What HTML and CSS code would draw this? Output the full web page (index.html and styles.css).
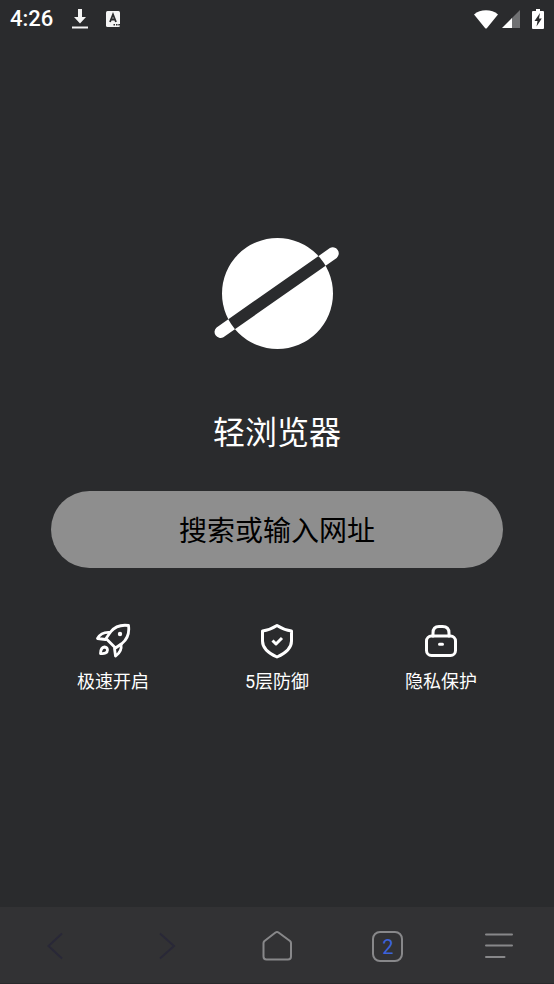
FILE: index.html
```html
<!DOCTYPE html>
<html lang="zh-CN">
<head>
<meta charset="utf-8">
<meta name="viewport" content="width=device-width, initial-scale=1">
<title>轻浏览器</title>
<link rel="stylesheet" href="styles.css">
</head>
<body>
<header class="status">
  <div class="status-left">
    <time class="clock">4:26</time>
    <svg class="download" width="16" height="20" viewBox="0 0 16 20" aria-hidden="true"><path fill="#f4f4f4" d="M6 0h4v8h4l-6 6.500L2 8h4zM0 17.500h16v2H0z"/></svg>
    <svg class="keyboard" width="14" height="16" viewBox="0 0 14 16" aria-hidden="true"><rect width="14" height="16" rx="1.500" fill="#f4f4f4"/><path d="M4 11 7 3.500 10 11M5 8.500h4" fill="none" stroke="#2a2b2d" stroke-width="1.800"/><path d="M7.500 13h1.500v1.500H7.500zM10 13h1.500v1.500H10zM12.300 13H14v1.500h-1.700z" fill="#2a2b2d"/></svg>
  </div>
  <div class="status-right">
    <svg class="wifi" width="24" height="19" viewBox="0 0 24 19" aria-hidden="true"><path fill="#fff" d="M0 4.500Q5 .3 12 .3T24 4.500L13 18Q12 19 11 18z"/></svg>
    <svg class="signal" width="18" height="19" viewBox="0 0 18 19" aria-hidden="true"><path fill="#707173" d="M18 0v18H9V9z"/><path fill="#fff" d="M10 8v10H0z"/></svg>
    <svg class="battery" width="12" height="20" viewBox="0 0 12 20" aria-hidden="true"><path fill="#fff" d="M4 0h4v2h3q1 0 1 1v16q0 1-1 1H1q-1 0-1-1V3q0-1 1-1h3z"/><path fill="#2a2b2d" d="M8 4 2.500 12H5.500L4.500 17.500 9.800 9.500H7z"/></svg>
  </div>
</header>
<main class="home">
  <svg class="logo" width="126" height="112" viewBox="0 0 126 112" role="img" aria-label="轻浏览器"><path fill="#fff" fill-rule="evenodd" d="M8 55.500a55.500 55.500 0 1 1 111 0a55.500 55.500 0 1 1-111 0zM2.600 89.400 115.900 10.100A6 6 0 0 1 122.700 19.900L9.400 99.200A6 6 0 0 1 2.600 89.400z"/></svg>
  <h1 class="title">轻浏览器</h1>
  <input class="search" type="text" placeholder="搜索或输入网址" aria-label="搜索或输入网址">
  <ul class="features">
    <li class="feature">
      <svg width="36" height="36" viewBox="0 0 36 36" fill="none" stroke="#fff" stroke-width="2.800" stroke-linejoin="round" stroke-linecap="round" aria-hidden="true"><path d="M33.500 2.500C26 1.500 19.500 4 15.500 9L11 15.500 20.500 25 27 20.500C32.500 16 34.500 9.500 33.500 2.500z"/><path d="M15 9.500C9 9 5 11 2.500 15.500L10.500 16.500M26 21.500C27 27 25 30 20.500 33L19.500 25.500"/><path d="M9.500 24C6.500 24.300 5.600 27 5.500 30.500C9.500 31 12.500 30 12.500 27Q12.300 24.300 9.500 24z"/><circle cx="25" cy="11" r="2.200" fill="#fff" stroke="none"/></svg>
      <span>极速开启</span>
    </li>
    <li class="feature">
      <svg width="36" height="36" viewBox="0 0 36 36" fill="none" stroke="#fff" stroke-width="3" stroke-linejoin="round" aria-hidden="true"><path d="M18 2.500Q25 7 32.500 8V18C32.500 26 26 30.500 18 34C10 30.500 3.500 26 3.500 18V8Q11 7 18 2.500z"/><path d="m13.500 17.500 3.500 3.500 6-6" stroke-width="3"/></svg>
      <span>5层防御</span>
    </li>
    <li class="feature">
      <svg width="36" height="36" viewBox="0 0 36 36" fill="none" stroke="#fff" stroke-width="3" stroke-linecap="round" aria-hidden="true"><rect x="3.500" y="13" width="29" height="19.500" rx="5"/><path d="M10 13V10Q10 3.500 16 3.500H19.500Q26 3.500 26 10V13M16.500 21.300h3"/></svg>
      <span>隐私保护</span>
    </li>
  </ul>
</main>
<nav class="toolbar">
  <button class="tool" type="button" aria-label="后退"><svg width="36" height="36" viewBox="0 0 36 36" fill="none" stroke="#292837" stroke-width="2"><path d="M25 5.500 11.500 18 25 30.500"/></svg></button>
  <button class="tool" type="button" aria-label="前进"><svg width="36" height="36" viewBox="0 0 36 36" fill="none" stroke="#292837" stroke-width="2"><path d="M12 5.500 26 18 12 30.500"/></svg></button>
  <button class="tool" type="button" aria-label="主页"><svg width="36" height="36" viewBox="0 0 36 36" fill="none" stroke="#88888a" stroke-width="2" stroke-linejoin="round"><path d="M16.500 4.500Q18 3.500 19.500 4.500L31 13Q32 14 32 15V28.500Q32 31.500 29 31.500H7.500Q4.500 31.500 4.500 28.500V15Q4.500 14 5.500 13z"/></svg></button>
  <button class="tool" type="button" aria-label="标签页"><span class="tabs">2</span></button>
  <button class="tool" type="button" aria-label="菜单"><svg width="36" height="36" viewBox="0 0 36 36" fill="none" stroke="#88888a" stroke-width="2" stroke-linecap="round"><path d="M5 6.500H31M5 17.500H31M5 29H23.500"/></svg></button>
</nav>
</body>
</html>
```
FILE: styles.css
```css
* {
  box-sizing: border-box;
}

body {
  margin: 0;
  min-height: 100vh;
  display: flex;
  flex-direction: column;
  background: #2a2b2d;
  color: #fff;
  font-family: Roboto, "Noto Sans CJK SC", sans-serif;
}

.status {
  display: flex;
  justify-content: space-between;
  align-items: center;
  height: 38px;
  padding: 0 10px;
}

.status-left,
.status-right {
  display: flex;
  align-items: center;
}

.clock {
  font-size: 22px;
  font-weight: 500;
  line-height: 24px;
}

.download {
  margin-left: 19px;
}

.keyboard {
  margin-left: 18px;
}

.signal {
  margin-left: 4px;
}

.battery {
  margin-left: 12px;
}

.home {
  flex: 1;
  display: flex;
  flex-direction: column;
  align-items: center;
  padding: 200px 51px 0;
}

.title {
  margin: 59px 0 0;
  font-size: 32px;
  line-height: 48px;
  font-weight: 400;
}

.search {
  width: 100%;
  height: 77px;
  margin-top: 34px;
  padding: 3px 32px 0;
  border: 0;
  border-radius: 39px;
  background: #8e8e8e;
  color: #000;
  font: inherit;
  font-size: 28px;
  text-align: center;
}

.search::placeholder {
  color: #000;
  opacity: 1;
}

.features {
  align-self: stretch;
  display: grid;
  grid-template-columns: repeat(3, 1fr);
  margin: 55px -20px 0;
  padding: 0;
  list-style: none;
}

.feature {
  display: flex;
  flex-direction: column;
  align-items: center;
  gap: 9px;
  font-size: 18px;
  line-height: 28px;
}

.toolbar {
  display: grid;
  grid-template-columns: repeat(5, 1fr);
  height: 77px;
  padding-top: 2px;
  background: #323234;
  border-bottom: 1px solid #29292b;
}

.tool {
  display: flex;
  align-items: center;
  justify-content: center;
  padding: 0;
  border: 0;
  background: none;
  font: inherit;
}

.tabs {
  width: 31px;
  height: 31px;
  border: 2px solid #88888a;
  border-radius: 8px;
  color: #3c63dc;
  font-size: 20px;
  line-height: 28px;
}
```
